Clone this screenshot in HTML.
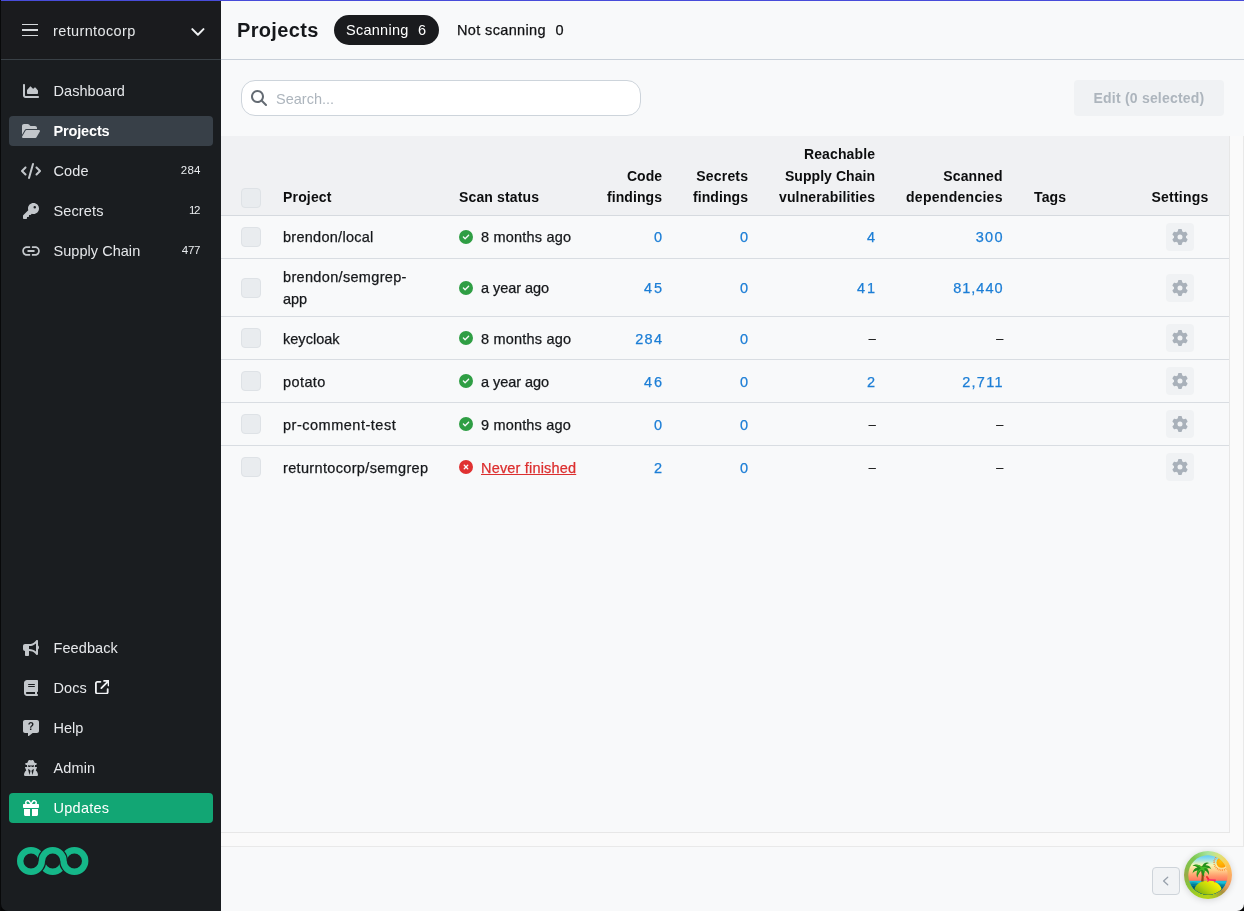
<!DOCTYPE html>
<html lang="en"><head><meta charset="utf-8"><title>Projects</title>
<style>
*{box-sizing:border-box}
html,body{margin:0;padding:0}
body{width:1244px;height:911px;overflow:hidden;position:relative;will-change:transform;background:#f8f9fa;font-family:"Liberation Sans", Arial, sans-serif;font-size:14.5px;color:#16181b;-webkit-font-smoothing:antialiased}
a{text-decoration:none;color:inherit}
span{white-space:nowrap}
.ic{display:block;flex:none}
.side{position:absolute;left:0;top:0;width:221px;height:911px;background:#1a1d20;border-left:1px solid #08090a}
.shead{position:absolute;left:0;top:0;width:220px;height:60px;background:#1a1b1e;border-bottom:1px solid #394046}
.org{position:absolute;left:52px;top:16px;line-height:30px;color:#e6e8ea}
.nav{position:absolute;left:8px;width:204px;height:30px;border-radius:4px;display:block;color:#e6e8eb}
.nav.active{background:#384048;color:#fff}
.nav.upd{background:#12a674;color:#fff}
.nico{position:absolute;left:12px;top:0;width:20px;height:30px;display:flex;align-items:center;justify-content:center;color:#c3c7cb}
.upd .nico{color:#fff}
.nlab{position:absolute;left:44.500px;top:0;line-height:30px}
.active .nlab{font-weight:700}
.ext{position:absolute;left:85.500px;top:6.500px;color:#f1f3f5}
.badge{position:absolute;right:12.500px;top:-2px;line-height:30px;color:#e9ecef}
.main{position:absolute;left:221px;top:0;width:1023px;height:911px;background:#f8f9fa}
.mhead{position:absolute;left:0;top:0;width:1023px;height:60px;border-bottom:1px solid #c9d0d9}
h1{position:absolute;left:16px;top:11px;margin:0;line-height:32px;font-weight:700;color:#16181b}
.tab{position:absolute;top:15px;height:30px;border-radius:15px;color:#101113}
.tab.on{background:#1a1b1e;color:#fff}
.tl{position:absolute;left:12px;top:0;line-height:30px}
.tc{position:absolute;top:0;line-height:30px}
.tools{position:absolute;left:0;top:60px;width:1023px;height:76px}
.search{position:absolute;left:20px;top:20px;width:400px;height:36px;border:1px solid #cdd4db;border-radius:14px;background:#fff;display:block}
.search .ic{position:absolute;left:8.500px;top:8.500px}
.ph{position:absolute;left:34px;top:1px;line-height:35px;color:#adb5bd}
.edit{position:absolute;left:853px;top:20px;width:150px;height:36px;border:0;border-radius:4px;background:#f0f2f4;color:#adb5bd;font-family:inherit;font-weight:700;padding:0;line-height:36px;text-align:center}
.scroll{position:absolute;left:0;top:136px;width:1023px;height:711px;background:#fafafa}
.view{position:absolute;left:0;top:0;width:1008px;height:696px;background:#f8f9fa;border-right:1px solid #e7e7e7;border-bottom:1px solid #e7e7e7;box-sizing:content-box}
.vedge{position:absolute;right:0;top:0;width:1px;height:711px;background:#e9e9e9}
.hedge{position:absolute;left:0;bottom:0;width:1023px;height:1px;background:#e9e9e9}
.thead{position:relative;height:80px;background:#f0f1f3;border-bottom:1px solid #d6dadf}
.th{position:absolute;bottom:6.200px;font-weight:700;line-height:21.700px;color:#0c0d0e}
.th.r{text-align:right}.th.c{text-align:center}
.cb{position:absolute;left:20px;top:50%;margin-top:-10px;width:20px;height:20px;border-radius:4px;background:#e9ecef;border:1px solid #dee2e6}
.tr{position:relative;border-bottom:1px solid #d9dde2;box-sizing:content-box}
.tr.last{border-bottom:0}
.td{position:absolute;top:50%;line-height:22px;height:22px;margin-top:-11px}
.lo .td{margin-top:-10px}
.lo .stat .ic{position:relative;top:-1px}
.td,.tab:not(.on) .tl,.tab:not(.on) .tc{-webkit-text-stroke:0.25px currentColor}
.name{left:62px}
.tr .name.two{height:44px;margin-top:-22px}
.stat{left:238px;display:flex;align-items:center}
.when{margin-left:8px}
.never{color:#dc2f2f;text-decoration:underline;text-decoration-thickness:1px;text-underline-offset:1px}
.r{text-align:right}
.lnk{color:#1c7ed6}
.dash{color:#111;font-size:12.500px}
.gear{position:absolute;left:945px;top:50%;margin-top:-14px;width:28px;height:28px;border:0;border-radius:4px;background:#f0f2f4;padding:6px}
.foot{position:absolute;left:0;top:847px;width:1023px;height:64px}
.pg{position:absolute;left:931px;top:20px;width:28px;height:28px;border:1px solid #ced4da;border-radius:4px;background:#f1f3f5;padding:0}
.island{position:absolute;left:1184px;top:851px;width:48px;height:48px;border-radius:50%;box-shadow:0 1px 7px rgba(0,0,0,.16)}
.ring{position:absolute;inset:0;border-radius:50%;background:conic-gradient(from 0deg,#a8e4a0 0deg,#d8e27c 30deg,#fdd055 55deg,#fcab62 90deg,#f29c62 118deg,#a8923e 140deg,#a9c620 163deg,#b6d317 180deg,#9ccb24 215deg,#86c23c 245deg,#98aa48 270deg,#86bf48 292deg,#7cc850 320deg,#a8e4a0 360deg)}
.topline{position:absolute;left:1px;top:0;width:1243px;height:1px;background:#484cda}
.corner{position:absolute;bottom:0;width:7px;height:7px;overflow:hidden}
.corner i{position:absolute;width:14px;height:14px;border-radius:7px;box-shadow:0 0 0 10px #050506}
</style></head>
<body>
<aside class="side">
<div class="shead"><svg width="16" height="14" viewBox="0 0 16 14" shape-rendering="crispEdges" style="position:absolute;left:21px;top:23px"><rect x="0" y="1" width="16" height="1" fill="#d6d9dc"/><rect x="0" y="6" width="16" height="2" fill="#d6d9dc"/><rect x="0" y="12" width="16" height="1" fill="#d6d9dc"/></svg><span class="org"><span style="font-size:14.5px;letter-spacing:0.37px;">returntocorp</span></span><svg width="16" height="10" viewBox="0 0 16 10" style="position:absolute;left:189px;top:27px"><path d="M2.300 2.100 L7.900 7.800 L13.500 2.100" fill="none" stroke="#eef0f2" stroke-width="2" stroke-linecap="round" stroke-linejoin="round"/></svg></div>
<nav>
<a class="nav " style="top:76px"><span class="nico"><svg class="ic" width="16" height="16" viewBox="0 0 512 512"><path fill="currentColor" d="M64 64c0-17.700-14.300-32-32-32S0 46.300 0 64V400c0 44.200 35.800 80 80 80H480c17.700 0 32-14.300 32-32s-14.300-32-32-32H80c-8.800 0-16-7.200-16-16V64zm96 288H448c17.700 0 32-14.300 32-32V251.800c0-7.600-2.700-15-7.700-20.800l-65.800-76.800c-12.100-14.200-33.700-15-46.900-1.800l-21 21c-10 10-26.400 9.200-35.400-1.600l-39.200-47c-12.600-15.100-35.700-15.400-48.700-.6L135.900 215c-5.100 5.800-7.900 13.300-7.900 21.100v84c0 17.700 14.300 32 32 32z"/></svg></span><span class="nlab"><span style="font-size:14.5px;letter-spacing:0.05px;">Dashboard</span></span></a>

<a class="nav active" style="top:116px"><span class="nico"><svg class="ic" width="18" height="16" viewBox="0 0 576 512"><path fill="currentColor" d="M88.700 223.800L0 375.800V96C0 60.700 28.700 32 64 32H181.500c17 0 33.300 6.700 45.300 18.700l26.500 26.500c12 12 28.300 18.700 45.300 18.700H416c35.300 0 64 28.700 64 64v32H144c-22.800 0-43.800 12.100-55.300 31.800zm27.600 16.100C122.100 230 132.600 224 144 224H544c11.500 0 22 6.100 27.700 16.100s5.700 22.200-.1 32.100l-112 192C453.900 474 443.400 480 432 480H32c-11.500 0-22-6.100-27.700-16.100s-5.700-22.200 .1-32.100l112-192z"/></svg></span><span class="nlab"><span style="font-size:14.5px;letter-spacing:-0.15px;">Projects</span></span></a>

<a class="nav " style="top:156px"><span class="nico"><svg class="ic" width="20" height="16" viewBox="0 0 640 512"><path fill="currentColor" d="M392.800 1.200c-17-4.900-34.700 5-39.600 22l-128 448c-4.900 17 5 34.700 22 39.600s34.700-5 39.600-22l128-448c4.900-17-5-34.700-22-39.600zm80.600 120.100c-12.500 12.500-12.500 32.800 0 45.300L562.700 256l-89.400 89.400c-12.500 12.500-12.500 32.800 0 45.300s32.800 12.500 45.300 0l112-112c12.500-12.500 12.500-32.800 0-45.300l-112-112c-12.500-12.500-32.800-12.500-45.300 0zm-306.700 0c-12.500-12.500-32.800-12.500-45.300 0l-112 112c-12.500 12.500-12.500 32.800 0 45.300l112 112c12.500 12.500 32.800 12.500 45.300 0s12.500-32.800 0-45.300L77.300 256l89.400-89.400c12.500-12.500 12.500-32.800 0-45.300z"/></svg></span><span class="nlab"><span style="font-size:14.5px;letter-spacing:0.14px;">Code</span></span><span class="badge"><span style="font-size:11.5px;letter-spacing:0.31px;margin-right:-0.31px;">284</span></span></a>

<a class="nav " style="top:196px"><span class="nico"><svg class="ic" width="16" height="16" viewBox="0 0 512 512"><path fill="currentColor" d="M336 352c97.200 0 176-78.800 176-176S433.200 0 336 0S160 78.800 160 176c0 18.700 2.900 36.800 8.300 53.700L7 391c-4.500 4.500-7 10.600-7 17v80c0 13.300 10.700 24 24 24h80c13.300 0 24-10.700 24-24V448h40c13.300 0 24-10.700 24-24V384h40c6.400 0 12.500-2.500 17-7l33.300-33.300c16.900 5.400 35 8.300 53.700 8.300zM376 96a40 40 0 1 1 0 80 40 40 0 1 1 0-80z"/></svg></span><span class="nlab"><span style="font-size:14.5px;letter-spacing:0.12px;">Secrets</span></span><span class="badge"><span style="font-size:11.5px;letter-spacing:-1.2px;margin-right:1.2px;">12</span></span></a>

<a class="nav " style="top:236px"><span class="nico"><svg class="ic" width="21" height="23" viewBox="0 0 24 24" preserveAspectRatio="none"><path fill="currentColor" transform="translate(-0.55 -0.5)" d="M3.900 12c0-1.710 1.390-3.100 3.100-3.100h4V7H7c-2.760 0-5 2.240-5 5s2.240 5 5 5h4v-1.900H7c-1.710 0-3.100-1.390-3.100-3.100zM8 13h8v-2H8v2zm9-6h-4v1.900h4c1.710 0 3.100 1.390 3.100 3.100s-1.390 3.100-3.100 3.100h-4V17h4c2.760 0 5-2.240 5-5s-2.240-5-5-5z"/></svg></span><span class="nlab"><span style="font-size:14.5px;letter-spacing:0.04px;">Supply Chain</span></span><span class="badge"><span style="font-size:11.5px;letter-spacing:-0.24px;margin-right:0.24px;">477</span></span></a>

<a class="nav " style="top:633px"><span class="nico"><svg class="ic" width="16" height="16" viewBox="0 0 512 512"><path fill="currentColor" d="M480 32c0-12.900-7.800-24.600-19.800-29.600s-25.700-2.200-34.900 6.900L381.700 53c-48 48-113.100 75-181 75H192 160 64c-35.300 0-64 28.700-64 64v96c0 35.300 28.700 64 64 64l0 128c0 17.700 14.300 32 32 32h64c17.700 0 32-14.300 32-32V352l8.700 0c67.900 0 133 27 181 75l43.600 43.600c9.200 9.200 22.900 11.900 34.900 6.900s19.800-16.600 19.800-29.600V300.400c18.600-8.800 32-32.500 32-60.400s-13.400-51.600-32-60.400V32zm-64 76.700V240 371.300C357.200 317.800 280.500 288 200.700 288H192V192h8.700c79.800 0 156.500-29.800 215.300-83.300z"/></svg></span><span class="nlab"><span style="font-size:14.5px;letter-spacing:0.09px;">Feedback</span></span></a>

<a class="nav " style="top:673px"><span class="nico"><svg class="ic" width="14" height="16" viewBox="0 0 448 512"><path fill="currentColor" d="M96 0C43 0 0 43 0 96V416c0 53 43 96 96 96H384h32c17.700 0 32-14.300 32-32s-14.300-32-32-32V384c17.700 0 32-14.300 32-32V32c0-17.700-14.300-32-32-32H384 96zm0 384H352v64H96c-17.700 0-32-14.300-32-32s14.300-32 32-32zm32-240c0-8.800 7.200-16 16-16H336c8.800 0 16 7.200 16 16s-7.200 16-16 16H144c-8.800 0-16-7.200-16-16zm16 48H336c8.800 0 16 7.200 16 16s-7.200 16-16 16H144c-8.800 0-16-7.200-16-16s7.200-16 16-16z"/></svg></span><span class="nlab"><span style="font-size:14.5px;letter-spacing:0.08px;">Docs</span></span><span class="ext"><svg class="ic" width="14.5" height="14.5" viewBox="0 0 512 512"><path fill="currentColor" d="M320 0c-17.700 0-32 14.300-32 32s14.300 32 32 32h82.700L201.400 265.400c-12.500 12.500-12.500 32.800 0 45.300s32.800 12.500 45.300 0L448 109.300V192c0 17.700 14.300 32 32 32s32-14.300 32-32V32c0-17.700-14.300-32-32-32H320zM80 32C35.800 32 0 67.800 0 112V432c0 44.200 35.800 80 80 80H400c44.200 0 80-35.800 80-80V320c0-17.700-14.300-32-32-32s-32 14.300-32 32V432c0 8.800-7.200 16-16 16H80c-8.800 0-16-7.200-16-16V112c0-8.800 7.200-16 16-16H192c17.700 0 32-14.300 32-32s-14.300-32-32-32H80z"/></svg></span></a>

<a class="nav " style="top:713px"><span class="nico"><svg class="ic" width="16" height="16" viewBox="0 0 512 512"><path fill="currentColor" d="M0 64C0 28.700 28.700 0 64 0H448c35.300 0 64 28.700 64 64V352c0 35.300-28.700 64-64 64H309.300L185.600 508.800c-4.800 3.600-11.300 4.200-16.800 1.500s-8.800-8.200-8.800-14.300V416H64c-35.300 0-64-28.700-64-64V64z"/><text x="256" y="322" text-anchor="middle" font-family='"Liberation Sans", Arial, sans-serif' font-weight="700" font-size="330" fill="#1a1d20">?</text></svg></span><span class="nlab"><span style="font-size:14.5px;letter-spacing:0.02px;">Help</span></span></a>

<a class="nav " style="top:753px"><span class="nico"><svg class="ic" width="14" height="16" viewBox="0 0 448 512"><path fill="currentColor" d="M224 16c-6.700 0-10.800-2.800-15.500-6.100C201.900 5.400 194 0 176 0c-30.500 0-52 43.700-66 89.400C62.700 98.100 32 112.200 32 128c0 14.300 25 27.100 64.600 35.900c-.4 4-.6 8-.6 12.100c0 17 3.300 33.200 9.300 48H45.400C38 224 32 230 32 237.400c0 1.700 .3 3.400 1 5l38.800 96.900C28.200 371.800 0 423.800 0 482.300C0 498.700 13.300 512 29.700 512H418.300c16.400 0 29.700-13.300 29.700-29.700c0-58.500-28.200-110.400-71.700-143L415 242.400c.6-1.600 1-3.300 1-5c0-7.400-6-13.400-13.400-13.400H342.700c6-14.800 9.300-31 9.300-48c0-4.100-.2-8.100-.6-12.100C391 155.100 416 142.300 416 128c0-15.800-30.700-29.900-78-38.600C324 43.700 302.500 0 272 0c-18 0-25.900 5.400-32.500 9.900c-4.800 3.300-8.800 6.100-15.500 6.100zm56 208H267.600c-16.500 0-31.100-10.600-36.300-26.200c-2.300-7-12.200-7-14.500 0c-5.200 15.600-19.900 26.200-36.300 26.200H168c-22.100 0-40-17.900-40-40V169.600c28.200 4.100 61 6.400 96 6.400s67.800-2.300 96-6.400V184c0 22.100-17.900 40-40 40zm-88 96l16 32L176 480 128 288l64 32zm128-32L272 480 240 352l16-32 64-32z"/></svg></span><span class="nlab"><span style="font-size:14.5px;letter-spacing:0.12px;">Admin</span></span></a>

<a class="nav upd" style="top:793px"><span class="nico"><svg class="ic" width="16" height="16" viewBox="0 0 512 512"><path fill="currentColor" d="M190.500 68.800L225.300 128H224 152c-22.100 0-40-17.900-40-40s17.900-40 40-40h2.200c14.900 0 28.800 7.900 36.300 20.800zM64 88c0 14.400 3.500 28 9.600 40H32c-17.700 0-32 14.300-32 32v64c0 17.700 14.300 32 32 32H480c17.700 0 32-14.300 32-32V160c0-17.700-14.300-32-32-32H438.400c6.100-12 9.600-25.600 9.600-40c0-48.600-39.400-88-88-88h-2.200c-31.900 0-61.500 16.900-77.700 44.400L256 85.500l-24.100-41C215.700 16.900 186.100 0 154.200 0H152C103.400 0 64 39.400 64 88zm336 0c0 22.100-17.900 40-40 40H288h-1.300l34.800-59.200C329.100 55.900 342.900 48 357.800 48H360c22.100 0 40 17.900 40 40zM32 288V464c0 26.500 21.500 48 48 48H224V288H32zM288 512H432c26.500 0 48-21.500 48-48V288H288V512z"/></svg></span><span class="nlab"><span style="font-size:14.5px;letter-spacing:0.26px;">Updates</span></span></a>

</nav>
<svg width="76" height="30" viewBox="0 0 76 30" style="position:absolute;left:14px;top:846px">
<g fill="none" stroke-width="6.400">
<circle cx="16" cy="15" r="10.800" stroke="#15b789"/>
<circle cx="59.400" cy="15" r="10.800" stroke="#15b789"/>
<circle cx="37.700" cy="15" r="10.800" stroke="#1a1d20" stroke-width="9"/>
<circle cx="37.700" cy="15" r="10.800" stroke="#15b789"/>
<g clip-path="url(#lgb)">
<circle cx="16" cy="15" r="10.800" stroke="#1a1d20" stroke-width="9"/>
<circle cx="59.400" cy="15" r="10.800" stroke="#1a1d20" stroke-width="9"/>
<circle cx="16" cy="15" r="10.800" stroke="#15b789"/>
<circle cx="59.400" cy="15" r="10.800" stroke="#15b789"/>
</g></g>
<defs><clipPath id="lgb"><rect x="0" y="15" width="76" height="15"/></clipPath></defs>
</svg>
</aside>
<main class="main">
<header class="mhead">
<h1><span style="font-size:20px;letter-spacing:0.34px;">Projects</span></h1>
<div class="tab on" style="left:113px;width:105px"><span class="tl"><span style="font-size:14.5px;letter-spacing:0.26px;">Scanning</span></span><span class="tc" style="left:84px"><span style="font-size:14.5px;">6</span></span></div>
<div class="tab" style="left:224px;width:130px"><span class="tl"><span style="font-size:14.5px;letter-spacing:0.36px;">Not scanning</span></span><span class="tc" style="left:110.500px"><span style="font-size:14.5px;">0</span></span></div>
</header>
<div class="tools">
<label class="search"><svg class="ic" width="16" height="16" viewBox="0 0 512 512"><path fill="#646b73" d="M416 208c0 45.900-14.900 88.300-40 122.700L502.600 457.400c12.500 12.500 12.500 32.800 0 45.300s-32.800 12.500-45.300 0L330.700 376c-34.400 25.200-76.800 40-122.700 40C93.100 416 0 322.900 0 208S93.100 0 208 0S416 93.100 416 208zM208 352a144 144 0 1 0 0-288 144 144 0 1 0 0 288z"/></svg><span class="ph"><span style="font-size:14.5px;">Search...</span></span></label>
<button class="edit" disabled><span style="font-size:14px;letter-spacing:0.21px;">Edit (0 selected)</span></button>
</div>
<section class="scroll"><div class="view">
<div class="thead">
<span class="cb" style="top:52px;margin-top:0"></span>
<div class="th l" style="left:62px"><span style="font-size:14px;letter-spacing:0.17px;">Project</span></div>
<div class="th l" style="left:238px"><span style="font-size:14px;letter-spacing:0.14px;">Scan status</span></div>
<div class="th r" style="right:567px"><span style="font-size:14px;position:relative;top:1px;">Code</span><br><span style="font-size:14px;letter-spacing:0.08px;margin-right:-0.08px;">findings</span></div>
<div class="th r" style="right:481px"><span style="font-size:14px;letter-spacing:0.18px;margin-right:-0.18px;position:relative;top:1px;">Secrets</span><br><span style="font-size:14px;letter-spacing:0.08px;margin-right:-0.08px;">findings</span></div>
<div class="th r" style="right:354px"><span style="font-size:14px;letter-spacing:0.12px;margin-right:-0.12px;">Reachable</span><br><span style="font-size:14px;letter-spacing:0.05px;margin-right:-0.05px;position:relative;top:1px;">Supply Chain</span><br><span style="font-size:14px;letter-spacing:0.13px;margin-right:-0.13px;">vulnerabilities</span></div>
<div class="th r" style="right:226.500px"><span style="font-size:14px;letter-spacing:0.14px;margin-right:-0.14px;position:relative;top:1px;">Scanned</span><br><span style="font-size:14px;letter-spacing:0.28px;margin-right:-0.28px;">dependencies</span></div>
<div class="th l" style="left:813px"><span style="font-size:14px;letter-spacing:0.12px;">Tags</span></div>
<div class="th c" style="left:909px;width:100px"><span style="font-size:14px;letter-spacing:0.25px;">Settings</span></div>
</div>
<div class="tr" style="height:42px">
<span class="cb"></span>
<span class="td name"><span style="font-size:14.5px;letter-spacing:0.27px;">brendon/local</span></span>
<span class="td stat"><svg class="ic" width="14" height="14" viewBox="0 0 512 512"><path fill="#2f9e44" d="M256 512A256 256 0 1 0 256 0a256 256 0 1 0 0 512zM369 209L241 337c-9.400 9.400-24.600 9.400-33.900 0l-64-64c-9.400-9.400-9.400-24.600 0-33.900s24.600-9.400 33.900 0l47 47L335 175c9.400-9.400 24.600-9.400 33.900 0s9.400 24.600 0 33.900z"/></svg><span class="when"><span style="font-size:14.5px;letter-spacing:0.19px;">8 months ago</span></span></span>
<a class="td r lnk" style="right:567px"><span style="font-size:14.5px;">0</span></a><a class="td r lnk" style="right:481px"><span style="font-size:14.5px;">0</span></a><a class="td r lnk" style="right:354px"><span style="font-size:14.5px;">4</span></a><a class="td r lnk" style="right:226.5px"><span style="font-size:14.5px;letter-spacing:1.32px;margin-right:-1.32px;">300</span></a>
<button class="gear"><svg class="ic" width="16" height="16" viewBox="0 0 512 512"><path fill="#a9b1ba" d="M495.900 166.600c3.200 8.700 .5 18.400-6.400 24.600l-43.300 39.400c1.100 8.300 1.700 16.800 1.700 25.400s-.6 17.100-1.700 25.400l43.300 39.400c6.900 6.200 9.600 15.900 6.400 24.600c-4.400 11.900-9.700 23.300-15.800 34.300l-4.700 8.100c-6.600 11-14 21.400-22.100 31.200c-5.900 7.200-15.700 9.600-24.500 6.800l-55.700-17.700c-13.400 10.300-28.200 18.900-44 25.400l-12.500 57.100c-2 9.100-9 16.300-18.200 17.800c-13.800 2.300-28 3.500-42.500 3.500s-28.700-1.200-42.500-3.500c-9.200-1.500-16.200-8.700-18.200-17.800l-12.500-57.100c-15.800-6.500-30.600-15.100-44-25.400L83.100 425.900c-8.800 2.800-18.600 .3-24.500-6.800c-8.100-9.800-15.500-20.200-22.100-31.200l-4.700-8.100c-6.100-11-11.400-22.400-15.800-34.300c-3.200-8.700-.5-18.400 6.400-24.600l43.300-39.400C64.600 273.100 64 264.600 64 256s.6-17.100 1.700-25.400L22.400 191.200c-6.900-6.200-9.600-15.900-6.400-24.600c4.400-11.900 9.700-23.300 15.800-34.300l4.700-8.100c6.600-11 14-21.400 22.100-31.200c5.900-7.200 15.700-9.600 24.500-6.800l55.700 17.700c13.400-10.300 28.200-18.900 44-25.400l12.500-57.100c2-9.100 9-16.300 18.200-17.800C227.300 1.200 241.500 0 256 0s28.700 1.200 42.500 3.500c9.200 1.500 16.200 8.700 18.200 17.800l12.500 57.100c15.800 6.500 30.600 15.100 44 25.400l55.700-17.700c8.800-2.800 18.600-.3 24.500 6.800c8.100 9.800 15.500 20.200 22.100 31.200l4.700 8.100c6.100 11 11.400 22.400 15.800 34.300zM256 336a80 80 0 1 0 0-160 80 80 0 1 0 0 160z"/></svg></button>
</div>
<div class="tr" style="height:57px">
<span class="cb"></span>
<span class="td name two"><span style="font-size:14.5px;letter-spacing:0.33px;">brendon/semgrep-</span><br><span style="font-size:14.5px;letter-spacing:-0.1px;">app</span></span>
<span class="td stat"><svg class="ic" width="14" height="14" viewBox="0 0 512 512"><path fill="#2f9e44" d="M256 512A256 256 0 1 0 256 0a256 256 0 1 0 0 512zM369 209L241 337c-9.400 9.400-24.600 9.400-33.900 0l-64-64c-9.400-9.400-9.400-24.600 0-33.900s24.600-9.400 33.900 0l47 47L335 175c9.400-9.400 24.600-9.400 33.900 0s9.400 24.600 0 33.900z"/></svg><span class="when"><span style="font-size:14.5px;letter-spacing:-0.04px;">a year ago</span></span></span>
<a class="td r lnk" style="right:567px"><span style="font-size:14.5px;letter-spacing:1.76px;margin-right:-1.76px;">45</span></a><a class="td r lnk" style="right:481px"><span style="font-size:14.5px;">0</span></a><a class="td r lnk" style="right:354px"><span style="font-size:14.5px;letter-spacing:1.76px;margin-right:-1.76px;">41</span></a><a class="td r lnk" style="right:226.5px"><span style="font-size:14.5px;letter-spacing:0.98px;margin-right:-0.98px;">81,440</span></a>
<button class="gear"><svg class="ic" width="16" height="16" viewBox="0 0 512 512"><path fill="#a9b1ba" d="M495.900 166.600c3.200 8.700 .5 18.400-6.400 24.600l-43.300 39.400c1.100 8.300 1.700 16.800 1.700 25.400s-.6 17.100-1.700 25.400l43.300 39.400c6.900 6.200 9.600 15.900 6.400 24.600c-4.400 11.900-9.700 23.300-15.800 34.300l-4.700 8.100c-6.600 11-14 21.400-22.100 31.200c-5.900 7.200-15.700 9.600-24.500 6.800l-55.700-17.700c-13.400 10.300-28.200 18.900-44 25.400l-12.500 57.100c-2 9.100-9 16.300-18.200 17.800c-13.800 2.300-28 3.500-42.500 3.500s-28.700-1.200-42.500-3.500c-9.200-1.500-16.200-8.700-18.200-17.800l-12.500-57.100c-15.800-6.500-30.600-15.100-44-25.400L83.100 425.900c-8.800 2.800-18.600 .3-24.500-6.800c-8.100-9.800-15.500-20.200-22.100-31.200l-4.700-8.100c-6.100-11-11.400-22.400-15.800-34.300c-3.200-8.700-.5-18.400 6.400-24.600l43.300-39.400C64.600 273.100 64 264.600 64 256s.6-17.100 1.700-25.400L22.400 191.200c-6.900-6.200-9.600-15.900-6.400-24.600c4.400-11.900 9.700-23.300 15.800-34.300l4.700-8.100c6.600-11 14-21.400 22.100-31.200c5.900-7.200 15.700-9.600 24.500-6.800l55.700 17.700c13.400-10.300 28.200-18.900 44-25.400l12.500-57.100c2-9.100 9-16.300 18.200-17.800C227.300 1.200 241.500 0 256 0s28.700 1.200 42.500 3.500c9.200 1.500 16.200 8.700 18.200 17.800l12.500 57.100c15.800 6.500 30.600 15.100 44 25.400l55.700-17.700c8.800-2.800 18.600-.3 24.500 6.800c8.100 9.800 15.500 20.200 22.100 31.200l4.700 8.100c6.100 11 11.400 22.400 15.800 34.300zM256 336a80 80 0 1 0 0-160 80 80 0 1 0 0 160z"/></svg></button>
</div>
<div class="tr lo" style="height:42px">
<span class="cb"></span>
<span class="td name"><span style="font-size:14.5px;letter-spacing:0.03px;">keycloak</span></span>
<span class="td stat"><svg class="ic" width="14" height="14" viewBox="0 0 512 512"><path fill="#2f9e44" d="M256 512A256 256 0 1 0 256 0a256 256 0 1 0 0 512zM369 209L241 337c-9.400 9.400-24.600 9.400-33.900 0l-64-64c-9.400-9.400-9.400-24.600 0-33.900s24.600-9.400 33.900 0l47 47L335 175c9.400-9.400 24.600-9.400 33.900 0s9.400 24.600 0 33.900z"/></svg><span class="when"><span style="font-size:14.5px;letter-spacing:0.19px;">8 months ago</span></span></span>
<a class="td r lnk" style="right:567px"><span style="font-size:14.5px;letter-spacing:1.32px;margin-right:-1.32px;">284</span></a><a class="td r lnk" style="right:481px"><span style="font-size:14.5px;">0</span></a><span class="td r dash" style="right:353.3px">&ndash;</span><span class="td r dash" style="right:225.8px">&ndash;</span>
<button class="gear"><svg class="ic" width="16" height="16" viewBox="0 0 512 512"><path fill="#a9b1ba" d="M495.900 166.600c3.200 8.700 .5 18.400-6.400 24.600l-43.300 39.400c1.100 8.300 1.700 16.800 1.700 25.400s-.6 17.100-1.700 25.400l43.300 39.400c6.900 6.200 9.600 15.900 6.400 24.600c-4.400 11.900-9.700 23.300-15.800 34.300l-4.700 8.100c-6.600 11-14 21.400-22.100 31.200c-5.900 7.200-15.700 9.600-24.500 6.800l-55.700-17.700c-13.400 10.300-28.200 18.900-44 25.400l-12.500 57.100c-2 9.100-9 16.300-18.200 17.800c-13.800 2.300-28 3.500-42.500 3.500s-28.700-1.200-42.500-3.500c-9.200-1.500-16.200-8.700-18.200-17.800l-12.500-57.100c-15.800-6.500-30.600-15.100-44-25.400L83.100 425.900c-8.800 2.800-18.600 .3-24.500-6.800c-8.100-9.800-15.500-20.200-22.100-31.200l-4.700-8.100c-6.100-11-11.400-22.400-15.800-34.300c-3.200-8.700-.5-18.400 6.400-24.600l43.300-39.400C64.600 273.100 64 264.600 64 256s.6-17.100 1.700-25.400L22.400 191.200c-6.900-6.200-9.600-15.900-6.400-24.600c4.400-11.900 9.700-23.300 15.800-34.300l4.700-8.100c6.600-11 14-21.400 22.100-31.200c5.900-7.200 15.700-9.600 24.500-6.800l55.700 17.700c13.400-10.300 28.200-18.900 44-25.400l12.500-57.100c2-9.100 9-16.300 18.200-17.800C227.300 1.200 241.500 0 256 0s28.700 1.200 42.500 3.500c9.200 1.500 16.200 8.700 18.200 17.800l12.500 57.100c15.800 6.500 30.600 15.100 44 25.400l55.700-17.700c8.800-2.800 18.600-.3 24.500 6.800c8.100 9.800 15.500 20.200 22.100 31.200l4.700 8.100c6.100 11 11.400 22.400 15.800 34.300zM256 336a80 80 0 1 0 0-160 80 80 0 1 0 0 160z"/></svg></button>
</div>
<div class="tr lo" style="height:42px">
<span class="cb"></span>
<span class="td name"><span style="font-size:14.5px;letter-spacing:0.41px;">potato</span></span>
<span class="td stat"><svg class="ic" width="14" height="14" viewBox="0 0 512 512"><path fill="#2f9e44" d="M256 512A256 256 0 1 0 256 0a256 256 0 1 0 0 512zM369 209L241 337c-9.400 9.400-24.600 9.400-33.900 0l-64-64c-9.400-9.400-9.400-24.600 0-33.900s24.600-9.400 33.900 0l47 47L335 175c9.400-9.400 24.600-9.400 33.900 0s9.400 24.600 0 33.900z"/></svg><span class="when"><span style="font-size:14.5px;letter-spacing:-0.04px;">a year ago</span></span></span>
<a class="td r lnk" style="right:567px"><span style="font-size:14.5px;letter-spacing:1.76px;margin-right:-1.76px;">46</span></a><a class="td r lnk" style="right:481px"><span style="font-size:14.5px;">0</span></a><a class="td r lnk" style="right:354px"><span style="font-size:14.5px;">2</span></a><a class="td r lnk" style="right:226.5px"><span style="font-size:14.5px;letter-spacing:1.27px;margin-right:-1.27px;">2,711</span></a>
<button class="gear"><svg class="ic" width="16" height="16" viewBox="0 0 512 512"><path fill="#a9b1ba" d="M495.900 166.600c3.200 8.700 .5 18.400-6.400 24.600l-43.300 39.400c1.100 8.300 1.700 16.800 1.700 25.400s-.6 17.100-1.700 25.400l43.300 39.400c6.900 6.200 9.600 15.900 6.400 24.600c-4.400 11.900-9.700 23.300-15.800 34.300l-4.700 8.100c-6.600 11-14 21.400-22.100 31.200c-5.900 7.200-15.700 9.600-24.500 6.800l-55.700-17.700c-13.400 10.300-28.200 18.900-44 25.400l-12.500 57.100c-2 9.100-9 16.300-18.200 17.800c-13.800 2.300-28 3.500-42.500 3.500s-28.700-1.200-42.500-3.500c-9.200-1.500-16.200-8.700-18.200-17.800l-12.500-57.100c-15.800-6.500-30.600-15.100-44-25.400L83.100 425.900c-8.800 2.800-18.600 .3-24.500-6.800c-8.100-9.800-15.500-20.200-22.100-31.200l-4.700-8.100c-6.100-11-11.400-22.400-15.800-34.300c-3.200-8.700-.5-18.400 6.400-24.600l43.300-39.400C64.600 273.100 64 264.600 64 256s.6-17.100 1.700-25.400L22.400 191.200c-6.900-6.200-9.600-15.900-6.400-24.600c4.400-11.900 9.700-23.300 15.800-34.300l4.700-8.100c6.600-11 14-21.400 22.100-31.200c5.900-7.200 15.700-9.600 24.500-6.800l55.700 17.700c13.400-10.300 28.200-18.900 44-25.400l12.500-57.100c2-9.100 9-16.300 18.200-17.800C227.300 1.200 241.500 0 256 0s28.700 1.200 42.500 3.500c9.200 1.500 16.200 8.700 18.200 17.800l12.500 57.100c15.800 6.500 30.600 15.100 44 25.400l55.700-17.700c8.800-2.800 18.600-.3 24.500 6.800c8.100 9.800 15.500 20.200 22.100 31.200l4.700 8.100c6.100 11 11.400 22.400 15.800 34.300zM256 336a80 80 0 1 0 0-160 80 80 0 1 0 0 160z"/></svg></button>
</div>
<div class="tr lo" style="height:42px">
<span class="cb"></span>
<span class="td name"><span style="font-size:14.5px;letter-spacing:0.51px;">pr-comment-test</span></span>
<span class="td stat"><svg class="ic" width="14" height="14" viewBox="0 0 512 512"><path fill="#2f9e44" d="M256 512A256 256 0 1 0 256 0a256 256 0 1 0 0 512zM369 209L241 337c-9.400 9.400-24.600 9.400-33.900 0l-64-64c-9.400-9.400-9.400-24.600 0-33.900s24.600-9.400 33.900 0l47 47L335 175c9.400-9.400 24.600-9.400 33.900 0s9.400 24.600 0 33.900z"/></svg><span class="when"><span style="font-size:14.5px;letter-spacing:0.17px;">9 months ago</span></span></span>
<a class="td r lnk" style="right:567px"><span style="font-size:14.5px;">0</span></a><a class="td r lnk" style="right:481px"><span style="font-size:14.5px;">0</span></a><span class="td r dash" style="right:353.3px">&ndash;</span><span class="td r dash" style="right:225.8px">&ndash;</span>
<button class="gear"><svg class="ic" width="16" height="16" viewBox="0 0 512 512"><path fill="#a9b1ba" d="M495.900 166.600c3.200 8.700 .5 18.400-6.400 24.600l-43.300 39.400c1.100 8.300 1.700 16.800 1.700 25.400s-.6 17.100-1.700 25.400l43.300 39.400c6.900 6.200 9.600 15.900 6.400 24.600c-4.400 11.900-9.700 23.300-15.800 34.300l-4.700 8.100c-6.600 11-14 21.400-22.100 31.200c-5.900 7.200-15.700 9.600-24.500 6.800l-55.700-17.700c-13.400 10.300-28.200 18.900-44 25.400l-12.500 57.100c-2 9.100-9 16.300-18.200 17.800c-13.800 2.300-28 3.500-42.500 3.500s-28.700-1.200-42.500-3.500c-9.200-1.500-16.200-8.700-18.200-17.800l-12.500-57.100c-15.800-6.500-30.600-15.100-44-25.400L83.100 425.900c-8.800 2.800-18.600 .3-24.500-6.800c-8.100-9.800-15.500-20.200-22.100-31.200l-4.700-8.100c-6.100-11-11.400-22.400-15.800-34.300c-3.200-8.700-.5-18.400 6.400-24.600l43.300-39.400C64.600 273.100 64 264.600 64 256s.6-17.100 1.700-25.400L22.400 191.200c-6.900-6.200-9.600-15.900-6.400-24.600c4.400-11.900 9.700-23.300 15.800-34.300l4.700-8.100c6.600-11 14-21.400 22.100-31.200c5.900-7.200 15.700-9.600 24.500-6.800l55.700 17.700c13.400-10.300 28.200-18.900 44-25.400l12.500-57.100c2-9.100 9-16.300 18.200-17.800C227.300 1.200 241.500 0 256 0s28.700 1.200 42.500 3.500c9.200 1.500 16.200 8.700 18.200 17.800l12.500 57.100c15.800 6.500 30.600 15.100 44 25.400l55.700-17.700c8.800-2.800 18.600-.3 24.500 6.800c8.100 9.800 15.500 20.200 22.100 31.200l4.700 8.100c6.100 11 11.400 22.400 15.800 34.300zM256 336a80 80 0 1 0 0-160 80 80 0 1 0 0 160z"/></svg></button>
</div>
<div class="tr last lo" style="height:42px">
<span class="cb"></span>
<span class="td name"><span style="font-size:14.5px;letter-spacing:0.34px;">returntocorp/semgrep</span></span>
<span class="td stat"><svg class="ic" width="14" height="14" viewBox="0 0 512 512"><path fill="#e03131" d="M256 512A256 256 0 1 0 256 0a256 256 0 1 0 0 512zM175 175c9.400-9.400 24.600-9.400 33.900 0l47 47 47-47c9.400-9.400 24.600-9.400 33.900 0s9.400 24.600 0 33.900l-47 47 47 47c9.400 9.400 9.400 24.600 0 33.900s-24.600 9.400-33.900 0l-47-47-47 47c-9.400 9.400-24.600 9.400-33.900 0s-9.400-24.600 0-33.900l47-47-47-47c-9.400-9.400-9.400-24.600 0-33.900z"/></svg><a class="when never"><span style="font-size:14.5px;letter-spacing:0.18px;">Never finished</span></a></span>
<a class="td r lnk" style="right:567px"><span style="font-size:14.5px;">2</span></a><a class="td r lnk" style="right:481px"><span style="font-size:14.5px;">0</span></a><span class="td r dash" style="right:353.3px">&ndash;</span><span class="td r dash" style="right:225.8px">&ndash;</span>
<button class="gear"><svg class="ic" width="16" height="16" viewBox="0 0 512 512"><path fill="#a9b1ba" d="M495.900 166.600c3.200 8.700 .5 18.400-6.400 24.600l-43.300 39.400c1.100 8.300 1.700 16.800 1.700 25.400s-.6 17.100-1.700 25.400l43.300 39.400c6.900 6.200 9.600 15.900 6.400 24.600c-4.400 11.900-9.700 23.300-15.800 34.300l-4.700 8.100c-6.600 11-14 21.400-22.100 31.200c-5.900 7.200-15.700 9.600-24.500 6.800l-55.700-17.700c-13.400 10.300-28.200 18.900-44 25.400l-12.500 57.100c-2 9.100-9 16.300-18.200 17.800c-13.800 2.300-28 3.500-42.500 3.500s-28.700-1.200-42.500-3.500c-9.200-1.500-16.200-8.700-18.200-17.800l-12.500-57.100c-15.800-6.500-30.600-15.100-44-25.400L83.100 425.900c-8.800 2.800-18.600 .3-24.500-6.800c-8.100-9.800-15.500-20.200-22.100-31.200l-4.700-8.100c-6.100-11-11.400-22.400-15.800-34.300c-3.200-8.700-.5-18.400 6.400-24.600l43.300-39.400C64.600 273.100 64 264.600 64 256s.6-17.100 1.700-25.400L22.400 191.200c-6.900-6.200-9.600-15.900-6.400-24.600c4.400-11.900 9.700-23.300 15.800-34.300l4.700-8.100c6.600-11 14-21.400 22.100-31.200c5.900-7.200 15.700-9.600 24.500-6.800l55.700 17.700c13.400-10.300 28.200-18.900 44-25.400l12.500-57.100c2-9.100 9-16.300 18.200-17.800C227.300 1.200 241.500 0 256 0s28.700 1.200 42.500 3.500c9.200 1.500 16.200 8.700 18.200 17.800l12.500 57.100c15.800 6.500 30.600 15.100 44 25.400l55.700-17.700c8.800-2.800 18.600-.3 24.500 6.800c8.100 9.800 15.500 20.200 22.100 31.200l4.700 8.100c6.100 11 11.400 22.400 15.800 34.300zM256 336a80 80 0 1 0 0-160 80 80 0 1 0 0 160z"/></svg></button>
</div>
</div><i class="vedge"></i><i class="hedge"></i></section>
<footer class="foot"><button class="pg"><svg width="26" height="26" viewBox="0 0 26 26" style="display:block"><path d="M14.700 9.200 L10.600 13 L14.700 16.800" fill="none" stroke="#98a1ac" stroke-width="1.300" stroke-linecap="round" stroke-linejoin="round"/></svg></button></footer>
</main>
<div class="island"><div class="ring"></div>
<svg width="40" height="40" viewBox="0 0 40 40" style="position:absolute;left:4px;top:4px">
<defs>
<linearGradient id="sky" x1="0" y1="0" x2="0" y2="1"><stop offset="0" stop-color="#5ec9f9"/><stop offset=".09" stop-color="#8bdcee"/><stop offset=".25" stop-color="#f5f8b6"/><stop offset=".38" stop-color="#ffd18e"/><stop offset=".52" stop-color="#ff9c6e"/><stop offset=".66" stop-color="#ff6f5c"/></linearGradient>
<linearGradient id="isl" x1="1" y1="0" x2="0" y2="1"><stop offset=".15" stop-color="#fff200"/><stop offset=".5" stop-color="#b4d10d"/><stop offset=".9" stop-color="#4c9410"/></linearGradient>
<radialGradient id="sun" cx=".4" cy=".4" r=".7"><stop offset="0" stop-color="#ffc107"/><stop offset="1" stop-color="#ff9800"/></radialGradient>
<clipPath id="cc"><circle cx="20" cy="20" r="19.700"/></clipPath>
</defs>
<g clip-path="url(#cc)">
<rect width="40" height="40" fill="url(#sky)"/>
<circle cx="33.800" cy="7.400" r="5.300" fill="url(#sun)"/>
<circle cx="33.800" cy="7.400" r="7.700" fill="none" stroke="#ff7d1f" stroke-width="1.700" stroke-dasharray="0.800 1.000" opacity=".9"/>
<rect x="0" y="25.800" width="40" height="14" fill="#19bfd8"/>
<path d="M0 28 Q5 26.600 10 28 T20 28 T30 28 T40 28 V40 H0Z" fill="#0a93ad"/>
<path d="M0 29.800 Q5 28.400 10 29.800 T20 29.800 T30 29.800 T40 29.800 V40 H0Z" fill="#007a94"/>
<path d="M0 31.600 Q5 30.200 10 31.600 T20 31.600 T30 31.600 T40 31.600 V40 H0Z" fill="#005d78"/>
<path d="M0 33.400 Q5 32 10 33.400 T20 33.400 T30 33.400 T40 33.400 V40 H0Z" fill="#004a66"/>
<ellipse cx="20" cy="36.300" rx="13.800" ry="10.900" fill="url(#isl)"/>
<g transform="translate(14.300 26.500) scale(1.100) translate(-14.300 -26.500)">
<path d="M13.200 26.600 C14 22 13.800 17.500 12.800 12.800 L14.800 12.600 C15.600 17 15.800 22 15.400 26.400Z" fill="#8a4a12"/>
<path d="M13.800 13.400 C11.500 10.600 8 10.400 5.400 12.400 C7.600 12.200 9 12.800 10 13.800 C7.600 14 5.800 16 5.400 19.200 C6.800 17.400 8.400 16.600 10 16.600 C8.800 18.600 8.800 21 9.800 23.200 C10.400 20.400 11.600 18.200 13.400 16.800 C13.600 19 14.400 21 16.200 22.200 C15.800 20 16 18 16.600 16.400 C18.400 17.200 19.800 18.800 20.400 20.800 C20.800 18.200 20 15.800 18.200 14.400 C20 14 21.600 14.600 22.600 15.600 C21.800 13 19.600 11.600 17.200 11.800 C18.200 10.600 19.400 10 20.800 10 C18.600 8.400 15.400 9.400 13.800 13.400Z" fill="#23901a"/>
<path d="M13.800 13.400 C12.400 11.600 10 11.200 8 12 C10.400 12 12 13 13 14.600 C11 15.400 9.800 17.400 9.800 19.800 C10.800 17.800 12.200 16.400 14 15.800 C15.400 16.600 16.400 18 16.800 19.600 C17.200 17.800 16.800 16 15.800 14.800 C17.400 14.200 19.200 14.600 20.400 15.600 C19.400 13.600 17.400 12.800 15.400 13.200Z" fill="#46bb26"/>
</g>
<path d="M17.800 21.600 L19.400 21.200 L21.600 24.200 L27.800 24.600 L28 25.800 L27.200 25.800 L27.400 27.400 L26.400 27.400 L26.200 25.900 L21 25.600 L20 27 L19 26.800 L19.800 25.200Z" fill="#ff1f6b"/>
<path d="M17.800 21.600 L19.400 21.200 L21.200 23.800 L19.900 24.600Z" fill="#f5371f"/>
</g></svg></div>
<div class="topline"></div>
<div class="corner" style="left:1px"><i style="left:0;bottom:0"></i></div>
<div class="corner" style="right:0"><i style="right:0;bottom:0"></i></div>
</body></html>
